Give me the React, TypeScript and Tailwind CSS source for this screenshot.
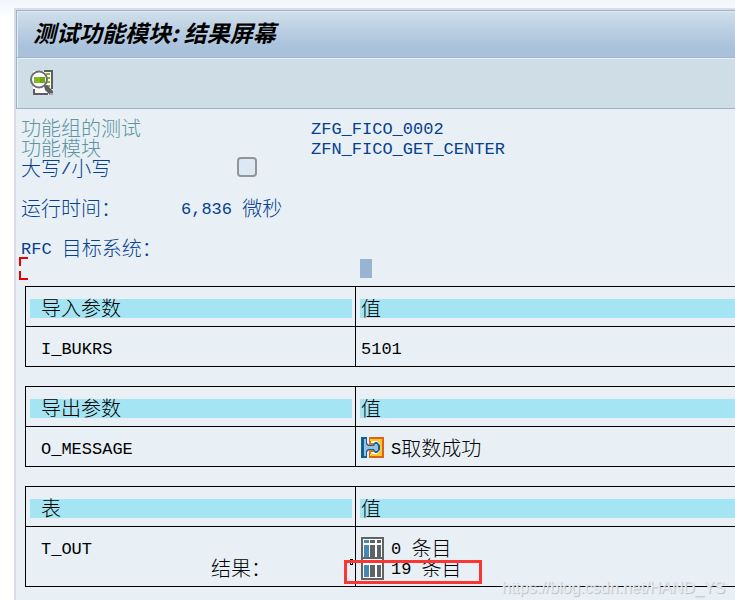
import React from "react";
import clsx from "clsx";

const Mono = ({ children }: { children: React.ReactNode }) => (
  <span className="font-['Liberation_Mono',monospace] text-[17px] leading-6">
    {children}
  </span>
);

const Line = ({
  className,
  children,
}: {
  className?: string;
  children?: React.ReactNode;
}) => (
  <div className={clsx("flex h-5 items-start leading-5 whitespace-pre", className)}>
    {children}
  </div>
);

const DisplayIcon = () => (
  <svg width="24" height="26" viewBox="0 0 24 26">
    <path d="M3 1h20v24H3z" fill="#fff" />
    <path d="M14 0h9v19h-2V2h-7zM3 19v6h15v-2H5v-4z" fill="#5c5f61" />
    <path d="M16 3h4v2h-4zM17 7h3v2h-3zM17 11h3v2h-3zM16 15h4v2h-4z" fill="#84b81c" />
    <circle cx="9" cy="9.500" r="8" fill="#fff" stroke="#6b6f72" strokeWidth="2" />
    <path d="M4 7h11v6H4z" fill="#84b81c" />
    <path d="M10 7h5v6h-5z" fill="#70a71b" />
    <path d="M14 16l3-1 6 6v4h-3l-5-5z" fill="#5c5f61" />
    <path d="M20 23h3v2h-3z" fill="#a5a8aa" />
  </svg>
);

const StructureIcon = () => (
  <svg width="23" height="21" viewBox="0 0 23 21">
    <path d="M8 0h15v21H8v-6h2v-8H8z" fill="#de6412" />
    <path d="M9 2h12v17H9v-3h8l2-2V7l-2-2H9z" fill="#ffc832" />
    <path d="M8 5l4-1h4l3 3v7l-3 3h-4l-4-2v-2h3V8H8z" fill="#fff" />
    <path d="M8 4h2v2h3v2H8zM8 13h5v2h-3v2H8z" fill="#e2731e" />
    <path d="M0 0h6v6l2 2h4l2-3h2l3 3v5l-3 3h-2l-2-3H8l-2 2v6H0z" fill="#0e6496" />
    <path d="M3 2h2v5l2 2h6l1-2h2l1 2v4l-1 1h-2l-1-2H7l-2 2v5H3z" fill="#9cbddd" />
    <path d="M1 0h1v21H1z" fill="#075987" />
  </svg>
);

const TableIcon = () => (
  <svg width="23" height="23" viewBox="0 0 23 23">
    <path d="M0 0h23v23H0z" fill="#606365" />
    <path d="M2 2h19v19H2z" fill="#fff" />
    <path d="M3 3h5v3H3zM3 8h5v12H3z" fill="#4588b3" />
    <path d="M9 3h5v3H9zM16 3h4v3h-4zM9 8h5v12H9zM16 8h4v12h-4z" fill="#606365" />
  </svg>
);

const HeadCell = ({ first, children }: { first?: boolean; children: string }) => (
  <th
    scope="col"
    className={clsx(
      "border-t border-black pt-3 pb-2 pl-1 text-left font-light",
      first && "w-[331px] border-x pr-[3px]"
    )}
  >
    <div className={clsx("h-[19px] bg-[#a5e5f3] leading-[18px]", first ? "pl-[11px]" : "pl-px")}>
      {children}
    </div>
  </th>
);

const ParamTable = ({
  title,
  name,
  children,
}: {
  title: string;
  name: React.ReactNode;
  children: React.ReactNode;
}) => (
  <table className="mb-[19px] w-full table-fixed border-separate border-spacing-0 border-b border-black text-black">
    <thead>
      <tr>
        <HeadCell first>{title}</HeadCell>
        <HeadCell>值</HeadCell>
      </tr>
    </thead>
    <tbody>
      <tr>
        <td className="relative border-x border-t border-black pt-[11px] pb-2 pl-[15px] align-top">
          {name}
        </td>
        <td className="relative border-t border-black pt-[11px] pb-2 pl-[5px] align-top">
          {children}
        </td>
      </tr>
    </tbody>
  </table>
);

const IconLine = ({ icon, children }: { icon: React.ReactNode; children: React.ReactNode }) => (
  <div className="flex h-5 gap-[7px]">
    <span className="-mt-px">{icon}</span>
    <Line>{children}</Line>
  </div>
);

const App = () => {
  return (
    <div className="min-h-screen bg-gradient-to-b from-[#f1f5fb] to-white to-3% pt-2 pl-[14px] font-['Noto_Sans_CJK_SC',sans-serif] text-xl font-light">
      <main className="relative flex min-h-[calc(100vh-8px)] flex-col overflow-hidden border-t-2 border-l-2 border-[#d7dce8] bg-[#e8f0f6]">
        <header className="flex h-12 items-center border border-r-0 border-[#9fb2c9] bg-gradient-to-b from-[#d0dfea] to-[#a9c1db] to-80% pb-1 pl-4 shadow-[inset_1px_1px_0_#dfeaf3]">
          <h1 className="text-[23px] leading-7 font-bold whitespace-pre text-black italic">
            测试功能模块: 结果屏幕
          </h1>
        </header>
        <div className="flex h-[51px] items-center border-b border-l border-[#9fb2c9] bg-[#cfdde7] pl-[13px] shadow-[inset_1px_1px_0_#e9f1f7]">
          <button type="button" aria-label="显示">
            <DisplayIcon />
          </button>
        </div>

        <section className="pt-[9px] pl-[5px] text-[#06408f]">
          <Line>
            <span className="w-[290px] text-[#5c94a0]">功能组的测试</span>
            <Mono>ZFG_FICO_0002</Mono>
          </Line>
          <Line>
            <span className="w-[290px] text-[#5c94a0]">功能模块</span>
            <Mono>ZFN_FICO_GET_CENTER</Mono>
          </Line>
          <Line>
            <label htmlFor="case" className="flex w-[216px] items-start">
              大写<Mono>/</Mono>小写
            </label>
            <input
              id="case"
              type="checkbox"
              className="-mt-px size-5 appearance-none rounded-sm border-2 border-[#929596] bg-[#dce8f3]"
            />
          </Line>
          <Line />
          <Line>
            <span className="w-40">运行时间：</span>
            <Mono>6,836 </Mono>微秒
          </Line>
          <Line />
          <Line>
            <Mono>RFC </Mono>目标系统：
          </Line>
          <div className="relative h-7">
            <svg className="absolute -top-px -left-[2px]" width="9" height="23" viewBox="0 0 9 23">
              <path d="M9 1H1v8M1 14v8h8" fill="none" stroke="#e60000" strokeWidth="2" />
            </svg>
            <div className="absolute top-px left-[339px] h-[19px] w-3 bg-[#9ab3d1]" />
          </div>
        </section>

        <section className="pl-[9px]">
          <ParamTable title="导入参数" name={<Line><Mono>I_BUKRS</Mono></Line>}>
            <Line>
              <Mono>5101</Mono>
            </Line>
          </ParamTable>
          <ParamTable title="导出参数" name={<Line><Mono>O_MESSAGE</Mono></Line>}>
            <IconLine icon={<StructureIcon />}>
              <Mono>S</Mono>取数成功
            </IconLine>
          </ParamTable>
          <ParamTable
            title="表"
            name={
              <>
                <Line>
                  <Mono>T_OUT</Mono>
                </Line>
                <Line className="pl-[170px]">结果：</Line>
                <span className="absolute top-8 right-0.5 h-1.5 w-[3px] border border-black bg-white" />
              </>
            }
          >
            <IconLine icon={<TableIcon />}>
              <Mono>0 </Mono>条目
            </IconLine>
            <IconLine icon={<TableIcon />}>
              <Mono>19 </Mono>条目
            </IconLine>
            <div className="absolute top-[33px] -left-3 h-6 w-[138px] border-3 border-[#fb3533]" />
          </ParamTable>
        </section>
        <span className="absolute right-2.5 bottom-2 font-['Liberation_Sans',sans-serif] text-base leading-5 font-normal text-[#e9edf0] [text-shadow:1px_1px_1px_#b5bcc2]">
          https://blog.csdn.net/HAND_YS
        </span>
      </main>
    </div>
  );
};

export default App;
